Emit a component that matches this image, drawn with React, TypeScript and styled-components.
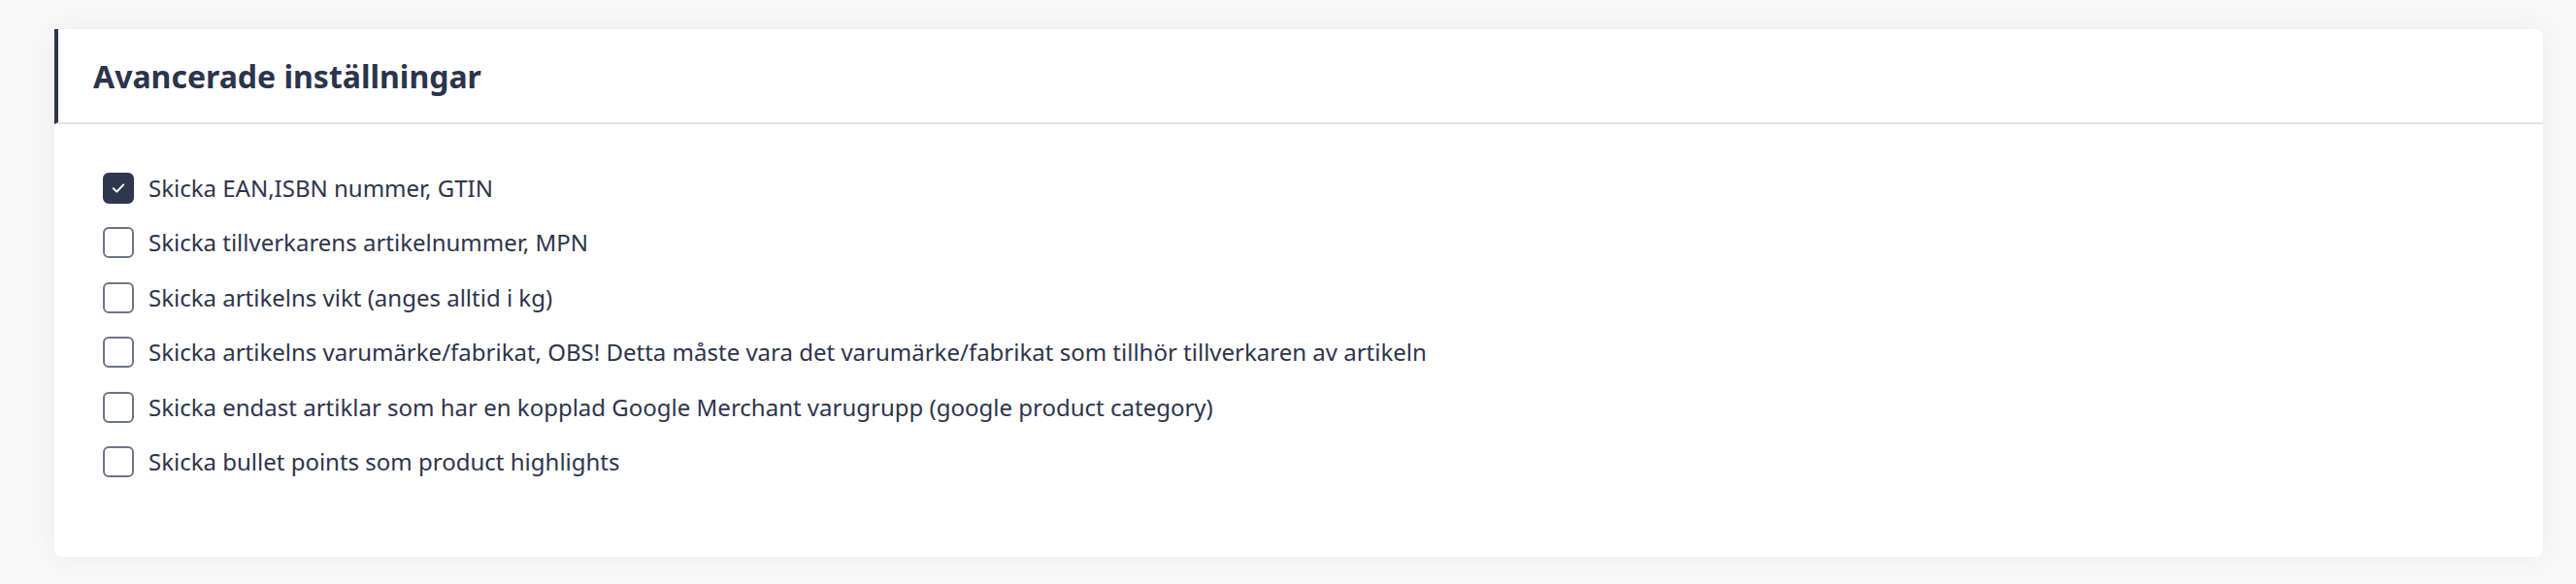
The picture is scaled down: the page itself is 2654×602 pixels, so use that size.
import React, { useState } from "react";
import styled, { createGlobalStyle } from "styled-components";

const GlobalStyle = createGlobalStyle`
  html, body {
    margin: 0;
    padding: 0;
    background: #f8f8f8;
  }
  body {
    font-family: "Noto Sans", "Open Sans", Arial, sans-serif;
    color: #2d344c;
  }
`;

const Page = styled.div`
  padding: 30px 34px 29px 56px;
`;

const Card = styled.section`
  background: #ffffff;
  border-radius: 8px;
  box-shadow: 0 0 28px rgba(0, 0, 0, 0.05);
  padding-bottom: 82px;
`;

const Header = styled.header`
  height: 96px;
  display: flex;
  align-items: center;
  border-left: 4px solid #2c344c;
  border-bottom: 2px solid #e4e3ea;
  padding-left: 36px;
`;

const Title = styled.h2`
  margin: 0;
  font-family: "Noto Sans", sans-serif;
  font-size: 32px;
  font-weight: 700;
  color: #2c344c;
`;

const List = styled.div`
  display: flex;
  flex-direction: column;
  gap: 24.4px;
  padding: 50px 50px 0 50px;
`;

const Row = styled.label`
  display: flex;
  align-items: center;
  gap: 15px;
  height: 32px;
  cursor: pointer;
`;

const Box = styled.span<{ $checked: boolean }>`
  box-sizing: border-box;
  flex: 0 0 32px;
  width: 32px;
  height: 32px;
  border-radius: 6px;
  border: 2px solid ${(p) => (p.$checked ? "#2e3650" : "#6f7388")};
  background: ${(p) => (p.$checked ? "#2e3650" : "#ffffff")};
  display: flex;
  align-items: center;
  justify-content: center;
`;

const Label = styled.span`
  font-family: "Noto Sans", sans-serif;
  font-size: 24px;
  color: #2d344c;
  line-height: 32px;
  white-space: nowrap;
`;

const items = [
  "Skicka EAN,ISBN nummer, GTIN",
  "Skicka tillverkarens artikelnummer, MPN",
  "Skicka artikelns vikt (anges alltid i kg)",
  "Skicka artikelns varumärke/fabrikat, OBS! Detta måste vara det varumärke/fabrikat som tillhör tillverkaren av artikeln",
  "Skicka endast artiklar som har en kopplad Google Merchant varugrupp (google product category)",
  "Skicka bullet points som product highlights",
];

function Check() {
  return (
    <svg width="14" height="12" viewBox="0 0 14 12" fill="none">
      <path d="M1.8 6.2 L5.3 9.6 L12.2 2.4" stroke="#ffffff" strokeWidth="2" strokeLinecap="round" strokeLinejoin="round" />
    </svg>
  );
}

export default function App() {
  const [checked, setChecked] = useState<boolean[]>([true, false, false, false, false, false]);
  return (
    <Page>
      <GlobalStyle />
      <Card>
        <Header>
          <Title>Avancerade inställningar</Title>
        </Header>
        <List>
          {items.map((text, i) => (
            <Row
              key={i}
              onClick={() =>
                setChecked((c) => c.map((v, j) => (j === i ? !v : v)))
              }
            >
              <Box $checked={checked[i]}>{checked[i] && <Check />}</Box>
              <Label>{text}</Label>
            </Row>
          ))}
        </List>
      </Card>
    </Page>
  );
}
